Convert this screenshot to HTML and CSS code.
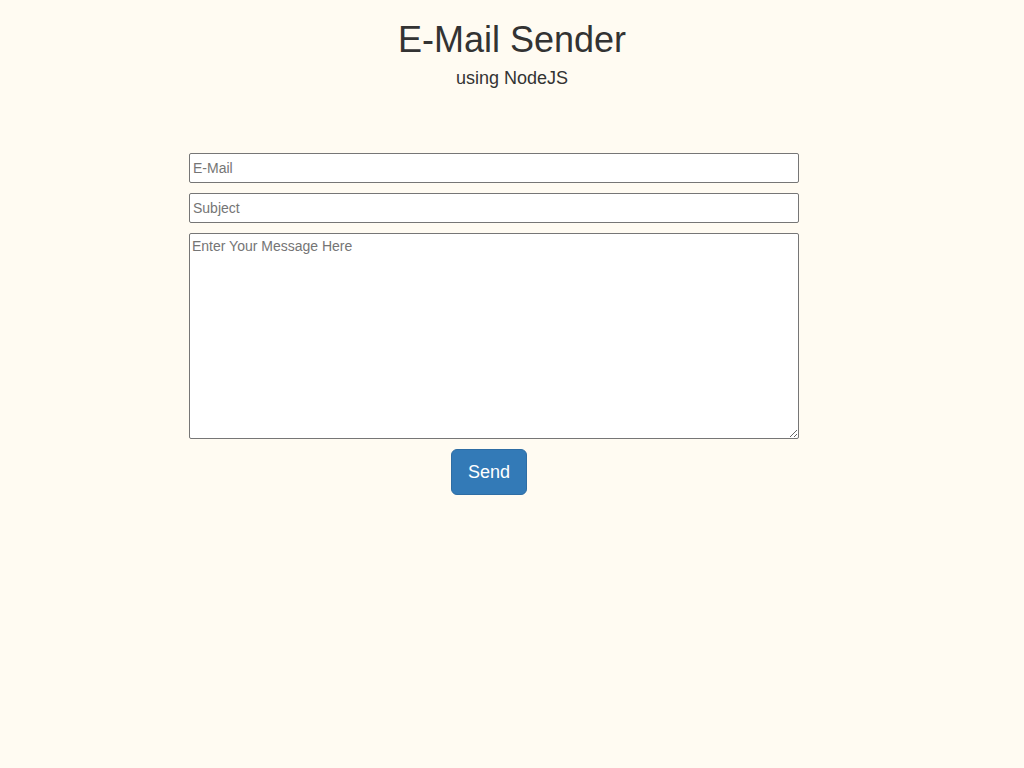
FILE: index.html
```html
<!DOCTYPE html>
<html lang="en">
<head>
<meta charset="utf-8">
<title>E-Mail Sender</title>
<link rel="stylesheet" href="styles.css">
</head>
<body>
<header class="header">
  <h1 class="title">E-Mail Sender</h1>
  <p class="subtitle">using NodeJS</p>
</header>
<form class="mail-form">
  <input class="field" type="email" placeholder="E-Mail">
  <input class="field" type="text" placeholder="Subject">
  <textarea class="field message" placeholder="Enter Your Message Here"></textarea>
  <div class="actions">
    <button class="send-btn" type="button">Send</button>
  </div>
</form>
</body>
</html>
```
FILE: styles.css
```css
html, body {
  margin: 0;
  padding: 0;
}
body {
  background: #fffbf2;
  font-family: "Liberation Sans", Arial, sans-serif;
  color: #333333;
}
.header {
  text-align: center;
  padding-top: 20px;
}
.title {
  margin: 0;
  font-size: 36px;
  font-weight: 400;
  line-height: 39.6px;
}
.subtitle {
  margin: 8px 0 0;
  font-size: 18px;
  line-height: 20px;
}
.mail-form {
  width: 610px;
  margin: 65px 0 0 189px;
  display: flex;
  flex-direction: column;
  gap: 10px;
}
.field {
  box-sizing: border-box;
  width: 610px;
  height: 30px;
  margin: 0;
  border: 1px solid #767676;
  border-radius: 2px;
  padding: 1px 3px;
  background: #ffffff;
  font-family: "Liberation Sans", Arial, sans-serif;
  font-size: 14px;
  color: #333333;
}
.field::placeholder {
  color: #757575;
}
.message {
  height: 206px;
  padding: 4px 2px 2px;
  resize: both;
}
.actions {
  padding-left: 262px;
}
.send-btn {
  box-sizing: border-box;
  width: 76px;
  height: 46px;
  background: #337ab7;
  border: 1px solid #2e6da4;
  border-radius: 6px;
  color: #ffffff;
  font-family: "Liberation Sans", Arial, sans-serif;
  font-size: 18px;
  padding: 2px 0 0;
  cursor: pointer;
}
```
